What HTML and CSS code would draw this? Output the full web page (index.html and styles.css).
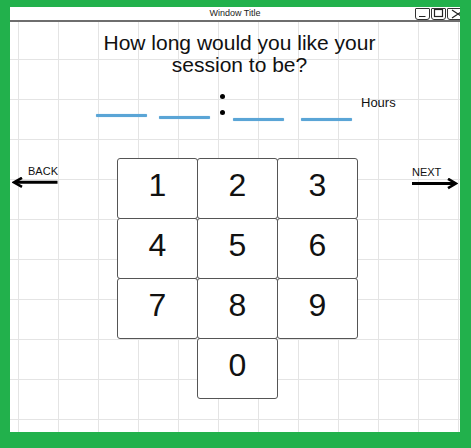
FILE: index.html
```html
<!DOCTYPE html>
<html>
<head>
<meta charset="utf-8">
<title>Session length</title>
<link rel="stylesheet" href="styles.css">
</head>
<body>
<div class="frame">
  <div class="titlebar">
    <span class="title">Window Title</span>
    <div class="controls">
      <span class="ctl"><svg width="15" height="12" viewBox="0 0 15 12"><path d="M4 8.5H10.5" stroke="#222" stroke-width="1.2" fill="none"/></svg></span>
      <span class="ctl"><svg width="15" height="12" viewBox="0 0 15 12"><rect x="3.5" y="1.5" width="8" height="7" stroke="#222" stroke-width="1.2" fill="none"/></svg></span>
      <span class="ctl wide"><svg width="20" height="12" viewBox="0 0 20 12"><path d="M5 2L11 6L5 10M17 2L11 6L17 10" stroke="#222" stroke-width="1.2" fill="none"/></svg></span>
    </div>
  </div>

  <h1 class="question">How long would you like your<br>session to be?</h1>

  <div class="entry">
    <span class="slot s1"></span>
    <span class="slot s2"></span>
    <span class="colon"><i></i><i></i></span>
    <span class="slot s3"></span>
    <span class="slot s4"></span>
    <span class="unit">Hours</span>
  </div>

  <div class="pad-row">
    <div class="nav back">
      <span class="nav-label">BACK</span>
      <svg width="46" height="12" viewBox="0 0 46 12"><path d="M45.5 5.3H3" stroke="#000" stroke-width="3" fill="none"/><path d="M10 0.8L2 5.3L10 9.8" stroke="#000" stroke-width="2.6" fill="none"/></svg>
    </div>
    <div class="keypad">
      <button class="key">1</button>
      <button class="key">2</button>
      <button class="key">3</button>
      <button class="key">4</button>
      <button class="key">5</button>
      <button class="key">6</button>
      <button class="key">7</button>
      <button class="key">8</button>
      <button class="key">9</button>
      <button class="key zero">0</button>
    </div>
    <div class="nav next">
      <span class="nav-label">NEXT</span>
      <svg width="46" height="13" viewBox="0 0 46 13"><path d="M0 5.5H43" stroke="#000" stroke-width="3" fill="none"/><path d="M36 0.8L44 5.5L36 10.2" stroke="#000" stroke-width="2.6" fill="none"/></svg>
    </div>
  </div>
</div>
</body>
</html>
```

FILE: styles.css
```css
html, body {
  margin: 0;
}

body {
  background: #22b14c;
  padding: 7px 11px 16px 10px;
  height: 448px;
  box-sizing: border-box;
  font-family: "Liberation Sans", Arial, sans-serif;
}

.frame {
  height: 100%;
  background-color: #fff;
  background-image:
    linear-gradient(to right, #e4e4e4 1px, transparent 1px),
    linear-gradient(to bottom, #e4e4e4 1px, transparent 1px);
  background-size: 40px 40px;
  background-position: 8px 12px;
  overflow: hidden;
  color: #111;
}

.titlebar {
  height: 13px;
  border-bottom: 2px solid #6e6e6e;
  background: #fff;
  display: grid;
  grid-template-columns: 1fr auto 1fr;
  font-size: 9px;
  line-height: 13px;
  overflow: hidden;
}

.title {
  grid-column: 2;
  color: #222;
}

.controls {
  grid-column: 3;
  justify-self: end;
  display: flex;
  gap: 1px;
  margin-top: 1px;
  margin-right: -7px;
}

.ctl {
  display: block;
  width: 15px;
  height: 12px;
  box-sizing: border-box;
  border: 1px solid #333;
  border-radius: 1px 1px 3px 3px;
  background: #fff;
  overflow: hidden;
}

.ctl svg {
  display: block;
  margin: -1px 0 0 -1px;
}

.ctl.wide {
  width: 20px;
}

.question {
  margin: 10px 0 0;
  padding-left: 9px;
  text-align: center;
  font-size: 21px;
  line-height: 22px;
  font-weight: normal;
  color: #111;
}

.entry {
  display: flex;
  align-items: flex-start;
  height: 30px;
  margin-top: 17px;
  padding-left: 86px;
}

.slot {
  display: block;
  width: 51px;
  height: 3px;
  background: #5aa5d6;
  border-radius: 1px;
  box-shadow: 0 0 1px #8fc3e6;
}

.s1 { margin-top: 21px; }
.s2 { margin-top: 23px; margin-left: 12px; }
.s3 { margin-top: 25px; margin-left: 8px; }
.s4 { margin-top: 25px; margin-left: 17px; }

.colon {
  display: flex;
  flex-direction: column;
  gap: 11px;
  margin-top: 1px;
  margin-left: 10px;
}

.colon i {
  display: block;
  width: 5px;
  height: 5px;
  border-radius: 50%;
  background: #000;
}

.unit {
  margin-top: 2px;
  margin-left: 9px;
  font-size: 13px;
  line-height: 15px;
  color: #111;
}

.pad-row {
  display: grid;
  grid-template-columns: 46px 1fr 46px;
  margin-top: 35px;
  padding: 0 2px;
}

.nav {
  display: flex;
  flex-direction: column;
  font-size: 11px;
  line-height: 13px;
  color: #111;
}

.nav svg {
  display: block;
  margin-top: -1px;
}

.back {
  padding-top: 7px;
  align-items: flex-end;
}

.next {
  padding-top: 8px;
  align-items: flex-start;
}

.keypad {
  justify-self: start;
  margin-left: 59px;
  display: grid;
  grid-template-columns: repeat(3, 80px);
  grid-auto-rows: 60px;
}

.key {
  width: 81px;
  height: 61px;
  box-sizing: border-box;
  margin: 0;
  border: 1px solid #555;
  border-radius: 3px;
  background: #fff;
  padding: 0 0 7px;
  display: flex;
  align-items: center;
  justify-content: center;
  font-family: "Liberation Sans", Arial, sans-serif;
  font-size: 32px;
  color: #111;
}

.zero {
  grid-column: 2;
}
```
